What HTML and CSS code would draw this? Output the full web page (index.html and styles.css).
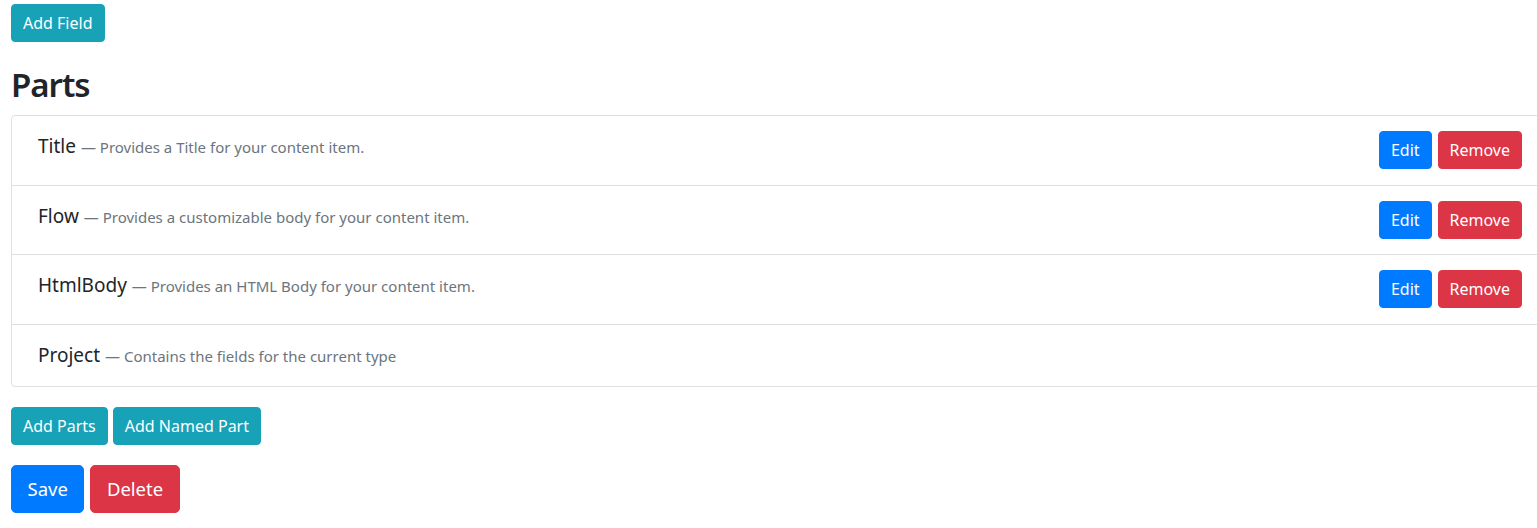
FILE: index.html
```html
<!DOCTYPE html>
<html>
<head>
<meta charset="utf-8">
<link rel="stylesheet" href="styles.css">
</head>
<body>
<div class="page">
  <div class="toolbar">
    <button class="btn btn-info">Add Field</button>
  </div>
  <h2 class="heading">Parts</h2>
  <ul class="card">
    <li class="row">
      <div class="row-text"><span class="name">Title</span> <small class="desc">— Provides a Title for your content item.</small></div>
      <div class="row-actions"><button class="btn btn-primary">Edit</button><button class="btn btn-danger">Remove</button></div>
    </li>
    <li class="row">
      <div class="row-text"><span class="name">Flow</span> <small class="desc">— Provides a customizable body for your content item.</small></div>
      <div class="row-actions"><button class="btn btn-primary">Edit</button><button class="btn btn-danger">Remove</button></div>
    </li>
    <li class="row">
      <div class="row-text"><span class="name">HtmlBody</span> <small class="desc">— Provides an HTML Body for your content item.</small></div>
      <div class="row-actions"><button class="btn btn-primary">Edit</button><button class="btn btn-danger">Remove</button></div>
    </li>
    <li class="row">
      <div class="row-text"><span class="name">Project</span> <small class="desc">— Contains the fields for the current type</small></div>
    </li>
  </ul>
  <div class="btn-group">
    <button class="btn btn-info">Add Parts</button>
    <button class="btn btn-info">Add Named Part</button>
  </div>
  <div class="btn-group">
    <button class="btn btn-lg btn-primary">Save</button>
    <button class="btn btn-lg btn-danger">Delete</button>
  </div>
</div>
</body>
</html>
```
FILE: styles.css
```css
html, body {
  margin: 0;
  padding: 0;
  overflow: hidden;
  background: #fff;
}
body {
  font-family: "Noto Sans", "Open Sans", "Liberation Sans", sans-serif;
  font-size: 16px;
  line-height: 1.5;
  color: #212529;
}
.page {
  padding: 4px 0 0 11px;
  width: 1537px;
}
.toolbar {
  display: flex;
}
.btn {
  font-family: inherit;
  font-size: 16px;
  line-height: 24px;
  padding: 6px 11px;
  border: 1px solid transparent;
  border-radius: 4px;
  color: #fff;
  cursor: pointer;
}
.btn-lg {
  font-size: 18.5px;
  line-height: 30px;
  padding: 8px 15.5px;
  border-radius: 5px;
}
.btn-info { background: #17a2b8; border-color: #17a2b8; }
.btn-primary { background: #007bff; border-color: #007bff; }
.btn-danger { background: #dc3545; border-color: #dc3545; }
.heading {
  margin: 22px 0 9px;
  font-size: 33px;
  line-height: 42px;
  font-weight: 600;
  letter-spacing: -1px;
  color: #212529;
}
.card {
  list-style: none;
  margin: 0;
  padding: 0;
  border: 1px solid #dfdfdf;
  border-radius: 4px;
  width: 1535px;
}
.row {
  display: flex;
  align-items: flex-start;
  justify-content: space-between;
  padding: 15px 25px 15.7px 26px;
  border-top: 1px solid #dfdfdf;
}
.row:first-child {
  border-top: none;
}
.row-text {
  font-size: 19px;
  line-height: 30px;
  height: 30px;
}
.desc {
  font-size: 15px;
  line-height: 1;
  color: #6c757d;
}
.row-actions {
  display: flex;
  gap: 6px;
}
.btn-group {
  display: flex;
  gap: 5px;
  margin-top: 20px;
}
.btn-group + .btn-group {
  gap: 6px;
}
```
